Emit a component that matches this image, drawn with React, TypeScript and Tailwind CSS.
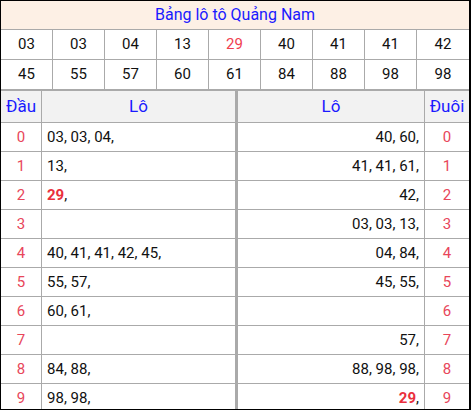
import React from 'react'

const topRows: { n: string; hot?: boolean }[][] = [
    [{ n: '03' }, { n: '03' }, { n: '04' }, { n: '13' }, { n: '29', hot: true }, { n: '40' }, { n: '41' }, { n: '41' }, { n: '42' }],
    [{ n: '45' }, { n: '55' }, { n: '57' }, { n: '60' }, { n: '61' }, { n: '84' }, { n: '88' }, { n: '98' }, { n: '98' }],
]

const loRows: { head: string[]; tail: string[] }[] = [
    { head: ['03', '03', '04'], tail: ['40', '60'] },
    { head: ['13'], tail: ['41', '41', '61'] },
    { head: ['29'], tail: ['42'] },
    { head: [], tail: ['03', '03', '13'] },
    { head: ['40', '41', '41', '42', '45'], tail: ['04', '84'] },
    { head: ['55', '57'], tail: ['45', '55'] },
    { head: ['60', '61'], tail: [] },
    { head: [], tail: ['57'] },
    { head: ['84', '88'], tail: ['88', '98', '98'] },
    { head: ['98', '98'], tail: ['29'] },
]

// the special number shows up bold and red
const SPECIAL = '29'

function NumberList({ items }: { items: string[] }) {
    return (
        <>
            {items.map((n, i) => (
                <React.Fragment key={i}>
                    {i > 0 && ' '}
                    {n === SPECIAL ? <span className="font-bold text-[#ea2f3c]">{n}</span> : n}
                    ,
                </React.Fragment>
            ))}
        </>
    )
}

export default function App() {
    return (
        <div
            className="w-[471px] h-[410px] overflow-hidden bg-white border-t border-l border-b border-r-2 border-black text-[15px] text-[#111]"
            style={{ fontFamily: 'Roboto, "Liberation Sans", sans-serif' }}
        >
            {/* Title */}
            <div className="h-[29px] flex items-center justify-center bg-[#fdf0e5] border-b border-[#aaaaaa] text-[16px] text-[#1a1aff]">
                Bảng lô tô Quảng Nam
            </div>

            {/* Result numbers */}
            {topRows.map((row, r) => (
                <div
                    key={r}
                    className={`grid grid-cols-9 h-[30px] border-b border-[#aaaaaa] ${r === 1 ? 'h-[31px] border-b-[2px]' : ''}`}
                >
                    {row.map((c, i) => (
                        <div
                            key={i}
                            className={`flex items-center justify-center ${i < 8 ? 'border-r border-[#aaaaaa]' : ''} ${c.hot ? 'text-[#f0404f]' : ''}`}
                        >
                            {c.n}
                        </div>
                    ))}
                </div>
            ))}

            {/* Lo to table */}
            <div className="grid grid-cols-[41px_196px_187px_44px]">
                <div className="h-[32px] flex items-center justify-center bg-[#f2f2f2] border-r border-b border-[#aaaaaa] text-[17px] text-[#1a1aff]">
                    Đầu
                </div>
                <div className="h-[32px] flex items-center justify-center bg-[#f2f2f2] border-r-[3px] border-b border-[#aaaaaa] text-[17px] text-[#1a1aff]">
                    Lô
                </div>
                <div className="h-[32px] flex items-center justify-center bg-[#f2f2f2] border-r border-b border-[#aaaaaa] text-[17px] text-[#1a1aff]">
                    Lô
                </div>
                <div className="h-[32px] flex items-center justify-center bg-[#f2f2f2] border-b border-[#aaaaaa] text-[17px] text-[#1a1aff]">
                    Đuôi
                </div>

                {loRows.map((row, i) => (
                    <React.Fragment key={i}>
                        <div className="h-[29px] flex items-center justify-center border-r border-b border-[#aaaaaa] text-[#e8465a]">
                            {i}
                        </div>
                        <div className="h-[29px] flex items-center px-[5px] border-r-[3px] border-b border-[#aaaaaa] whitespace-nowrap">
                            <NumberList items={row.head} />
                        </div>
                        <div className="h-[29px] flex items-center justify-end px-[5px] border-r border-b border-[#aaaaaa] whitespace-nowrap">
                            <NumberList items={row.tail} />
                        </div>
                        <div className="h-[29px] flex items-center justify-center border-b border-[#aaaaaa] text-[#e8465a]">
                            {i}
                        </div>
                    </React.Fragment>
                ))}
            </div>
        </div>
    )
}
